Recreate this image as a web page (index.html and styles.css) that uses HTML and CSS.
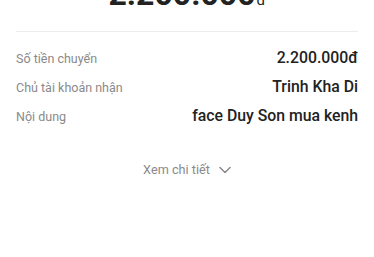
FILE: index.html
```html
<!DOCTYPE html>
<html lang="vi">
<head>
    <meta charset="UTF-8">
    <meta name="viewport" content="width=device-width, initial-scale=1.0">
    <title>Chi tiết giao dịch</title>
    <link rel="stylesheet" href="styles.css">
</head>
<body>
    <div class="amount">2.200.000<span class="currency">đ</span></div>

    <div class="divider"></div>

    <div class="details">
        <div class="row">
            <span class="label">Số tiền chuyển</span>
            <span class="value">2.200.000đ</span>
        </div>
        <div class="row">
            <span class="label">Chủ tài khoản nhận</span>
            <span class="value">Trinh Kha Di</span>
        </div>
        <div class="row">
            <span class="label">Nội dung</span>
            <span class="value">face Duy Son mua kenh</span>
        </div>
    </div>

    <div class="more">
        <span>Xem chi tiết</span>
        <svg class="chevron" width="12" height="8" viewBox="0 0 12 8">
            <path d="M1 1.5 L6 6.5 L11 1.5" fill="none" stroke="#8a8a8a" stroke-width="1.5" stroke-linecap="round" stroke-linejoin="round"/>
        </svg>
    </div>
</body>
</html>
```

FILE: styles.css
```css
body {
    margin: 0;
    background-color: #fff;
    font-family: Roboto, "Noto Sans", sans-serif;
    color: #222;
}
.amount {
    margin-top: -25px;
    text-align: center;
    font-size: 32px;
    font-weight: 700;
    line-height: 38px;
    color: #222;
}
.currency {
    font-size: 15px;
    font-weight: 400;
    margin-left: 1px;
}
.divider {
    height: 1px;
    margin: 12px 16px 0;
    background-color: #ececec;
}
.details {
    padding-top: 12px;
}
.row {
    display: flex;
    justify-content: space-between;
    align-items: baseline;
    padding: 4px 16px;
    line-height: 20px;
}
.label {
    font-size: 12.5px;
    color: #8a8a8a;
}
.value {
    font-size: 15.8px;
    font-weight: 500;
    color: #222;
}
.more {
    display: flex;
    justify-content: center;
    align-items: center;
    gap: 9px;
    margin-top: 29px;
    font-size: 12.7px;
    line-height: 20px;
    color: #8a8a8a;
}
```
